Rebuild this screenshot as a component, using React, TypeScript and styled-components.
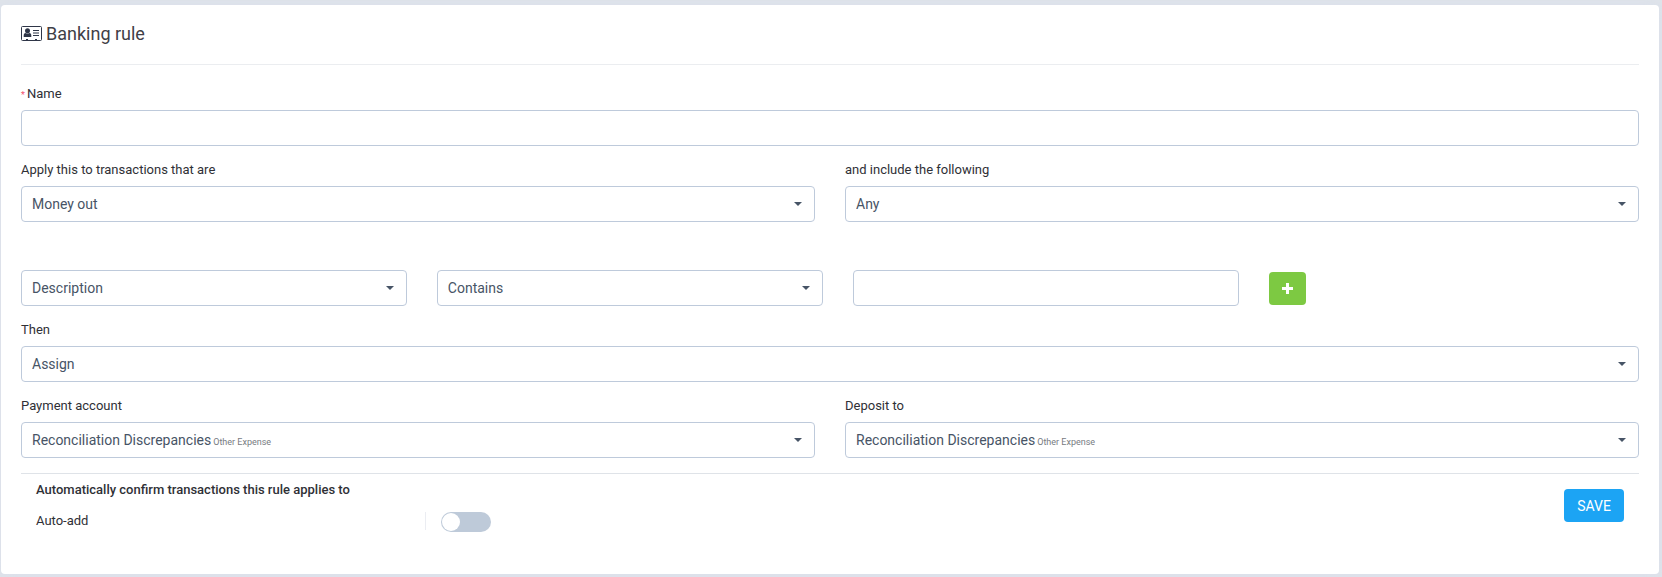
import React, { useId, useState } from "react";
import styled, { createGlobalStyle } from "styled-components";

const GlobalStyle = createGlobalStyle`
  *, *::before, *::after { box-sizing: border-box; }
  body {
    margin: 0;
    background: #dfe4ea;
    color: #2f3036;
    font-family: Roboto, "Liberation Sans", sans-serif;
    font-size: 13px;
    line-height: 20px;
  }
`;

const Page = styled.main`
  padding: 5px 3px 3px 1px;
`;

const Card = styled.form`
  padding: 0 20px 42px;
  background: #fff;
  border-radius: 4px;
  box-shadow: 0 1px 15px 1px rgba(208, 213, 240, 0.3);
`;

const CardHeader = styled.header`
  display: flex;
  align-items: center;
  gap: 4px;
  height: 60px;
  padding-bottom: 2px;
  border-bottom: 1px solid #ebedf0;
`;

const Title = styled.h1`
  margin: 0;
  color: #3f4047;
  font-size: 18px;
  font-weight: 400;
  line-height: 24px;
`;

const Fields = styled.div`
  display: flex;
  flex-direction: column;
  gap: 14px;
  padding: 19px 0 15px;
`;

const HalfRow = styled.div`
  display: grid;
  grid-template-columns: repeat(2, minmax(0, 1fr));
  gap: 30px;
`;

const ConditionRow = styled.div`
  display: grid;
  grid-template-columns: repeat(3, minmax(0, 25fr)) minmax(0, 24fr);
  align-items: center;
  gap: 30px;
  padding-top: 34px;
`;

const Field = styled.div`
  display: flex;
  flex-direction: column;
  gap: 6px;
`;

const Label = styled.label`
  color: #2f3036;
`;

const Required = styled.span`
  margin-right: 2px;
  color: #f4516c;
  font-size: 9px;
  line-height: 10px;
`;

const TextInput = styled.input`
  width: 100%;
  height: 36px;
  padding: 0 10px;
  border: 1px solid #becadb;
  border-radius: 4px;
  background: #fff;
  color: #475466;
  font: inherit;
  font-size: 14px;
`;

const SelectShell = styled.div`
  position: relative;
`;

const SelectControl = styled.select<{ $covered: boolean }>`
  display: block;
  width: 100%;
  height: 36px;
  padding: 0 30px 0 10px;
  border: 1px solid #becadb;
  border-radius: 4px;
  appearance: none;
  background: #fff;
  color: ${(p) => (p.$covered ? "transparent" : "#475466")};
  font: inherit;
  font-size: 14px;

  option { color: #475466; }
`;

const Caret = styled.svg`
  position: absolute;
  top: 16px;
  right: 13px;
  pointer-events: none;
`;

const SelectedAccount = styled.span`
  position: absolute;
  inset: 0 30px 0 11px;
  overflow: hidden;
  color: #475466;
  font-size: 14px;
  line-height: 36px;
  white-space: nowrap;
  pointer-events: none;
`;

const AccountType = styled.small`
  margin-left: 2px;
  color: #777b82;
  font-size: 9px;
`;

const Button = styled.button<{ $tone: "add" | "save" }>`
  display: inline-flex;
  align-items: center;
  justify-content: center;
  height: 33px;
  padding: 0 13px;
  border: 0;
  border-radius: 4px;
  background: ${(p) => (p.$tone === "add" ? "#7dc942" : "#1ca4f4")};
  color: #fff;
  font: inherit;
  font-size: 14px;
  cursor: pointer;
`;

const AddCell = styled.div`
  display: flex;
`;

const Footer = styled.footer`
  display: flex;
  align-items: flex-start;
  justify-content: space-between;
  padding: 5px 15px 0;
  border-top: 1px solid #dfe3e8;
`;

const AutoConfirm = styled.div`
  flex: 0 1 457px;
`;

const SectionTitle = styled.h2`
  margin: 0;
  padding-bottom: 11px;
  color: #2f3036;
  font-size: 13px;
  font-weight: 500;
  line-height: 22px;
`;

const ToggleRow = styled.div`
  display: grid;
  grid-template-columns: minmax(0, 390px) auto;
`;

const ToggleLabel = styled.label`
  height: 18px;
  border-right: 1px solid #ebedf2;
  line-height: 18px;
`;

const Toggle = styled.input`
  display: flex;
  align-items: center;
  width: 50px;
  height: 20px;
  margin: 0 0 0 15px;
  padding: 0 1px;
  appearance: none;
  border-radius: 10px;
  background: #becad9;
  cursor: pointer;

  &::before {
    content: "";
    width: 18px;
    height: 18px;
    border-radius: 50%;
    background: #fff;
  }

  &:checked {
    justify-content: flex-end;
    background: #1ca4f4;
  }
`;

const SaveCell = styled.div`
  padding-top: 10px;
`;

function CardIcon() {
  return (
    <svg width="21" height="15" viewBox="0 0 21 15" aria-hidden="true" fill="#2f3648">
      <rect x="0.5" y="0.5" width="20" height="14" rx="1" fill="none" stroke="#2f3648" />
      <circle cx="6.5" cy="4.8" r="2.5" />
      <path d="M2.700 11V9.400C2.700 7.800 3.700 7 4.800 7c1 .8 2.400 .8 3.400 0 1.100 0 2.100 .8 2.100 2.400V11z" />
      <path d="M12 4h6v1h-6zM12 6.500h6v1h-6zM12 9h6v1h-6z" />
      <path d="M5 13h2v1H5zM14 13h2v1h-2z" />
    </svg>
  );
}

interface SelectProps {
  id: string;
  options: string[];
  label?: string;
  accountType?: string;
}

function Select({ id, options, label, accountType }: SelectProps) {
  const [value, setValue] = useState(options[0]);
  return (
    <SelectShell>
      <SelectControl
        id={id}
        aria-label={label}
        $covered={Boolean(accountType)}
        value={value}
        onChange={(e) => setValue(e.target.value)}
      >
        {options.map((o) => (
          <option key={o}>{o}</option>
        ))}
      </SelectControl>
      {accountType && (
        <SelectedAccount aria-hidden="true">
          {value}
          <AccountType>{accountType}</AccountType>
        </SelectedAccount>
      )}
      <Caret width="8" height="4" viewBox="0 0 8 4" aria-hidden="true">
        <path d="M0 0h8L4 4z" fill="#475466" />
      </Caret>
    </SelectShell>
  );
}

function SelectField({ text, options, accountType }: { text: string; options: string[]; accountType?: string }) {
  const id = useId();
  return (
    <Field>
      <Label htmlFor={id}>{text}</Label>
      <Select id={id} options={options} accountType={accountType} />
    </Field>
  );
}

export default function App() {
  return (
    <>
      <GlobalStyle />
      <Page>
        <Card onSubmit={(e: React.FormEvent) => e.preventDefault()}>
          <CardHeader>
            <CardIcon />
            <Title>Banking rule</Title>
          </CardHeader>

          <Fields>
            <Field>
              <Label htmlFor="rule-name">
                <Required>*</Required>
                Name
              </Label>
              <TextInput id="rule-name" type="text" />
            </Field>

            <HalfRow>
              <SelectField text="Apply this to transactions that are" options={["Money out"]} />
              <SelectField text="and include the following" options={["Any"]} />
            </HalfRow>

            <ConditionRow>
              <Select id="condition-field" label="Condition field" options={["Description"]} />
              <Select id="condition-operator" label="Condition operator" options={["Contains"]} />
              <TextInput type="text" aria-label="Condition value" />
              <AddCell>
                <Button type="button" $tone="add" aria-label="Add condition">
                  <svg width="11" height="11" viewBox="0 0 11 11" aria-hidden="true">
                    <path d="M4 0h3v4h4v3H7v4H4V7H0V4h4z" fill="#fff" />
                  </svg>
                </Button>
              </AddCell>
            </ConditionRow>

            <SelectField text="Then" options={["Assign"]} />

            <HalfRow>
              <SelectField
                text="Payment account"
                options={["Reconciliation Discrepancies"]}
                accountType="Other Expense"
              />
              <SelectField
                text="Deposit to"
                options={["Reconciliation Discrepancies"]}
                accountType="Other Expense"
              />
            </HalfRow>
          </Fields>

          <Footer>
            <AutoConfirm>
              <SectionTitle>Automatically confirm transactions this rule applies to</SectionTitle>
              <ToggleRow>
                <ToggleLabel htmlFor="auto-add">Auto-add</ToggleLabel>
                <Toggle id="auto-add" type="checkbox" role="switch" />
              </ToggleRow>
            </AutoConfirm>
            <SaveCell>
              <Button type="submit" $tone="save">SAVE</Button>
            </SaveCell>
          </Footer>
        </Card>
      </Page>
    </>
  );
}
